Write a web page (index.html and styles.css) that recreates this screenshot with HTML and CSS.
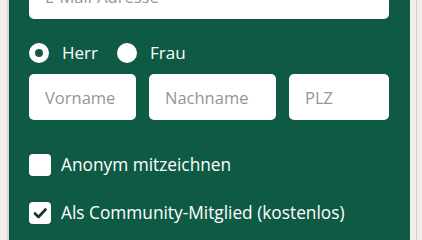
FILE: index.html
```html
<!DOCTYPE html>
<html lang="de">
<head>
<meta charset="utf-8">
<title>Formular</title>
<link rel="stylesheet" href="styles.css">
</head>
<body>
<div class="page">
  <div class="panel">
    <form class="form">
      <input class="field field-email" type="email" placeholder="E-Mail-Adresse">
      <div class="radios">
        <label class="radio"><span class="dot dot-on"></span>Herr</label>
        <label class="radio"><span class="dot"></span>Frau</label>
      </div>
      <div class="names">
        <input class="field" type="text" placeholder="Vorname">
        <input class="field" type="text" placeholder="Nachname">
        <input class="field" type="text" placeholder="PLZ">
      </div>
      <label class="check"><span class="box"></span>Anonym mitzeichnen</label>
      <label class="check"><span class="box"><svg class="tick" viewBox="0 0 22 22" width="22" height="22"><path d="M6 11.5l3.5 3.5L16.5 7.5" fill="none" stroke="#12372b" stroke-width="2.6" stroke-linecap="round" stroke-linejoin="round"/></svg></span>Als Community-Mitglied (kostenlos)</label>
    </form>
  </div>
</div>
</body>
</html>
```

FILE: styles.css
```css
html, body {
  margin: 0;
  padding: 0;
  min-height: 100%;
}
body {
  background: #f1eee9;
  font-family: "Open Sans", "Liberation Sans", sans-serif;
}
.page {
  margin-left: 7px;
  width: 407px;
  min-height: 100vh;
  border-left: 2px solid #dcd8d0;
  border-right: 1px solid #d4d0c8;
  background: #f1eee9;
  display: flex;
}
.panel {
  width: 401px;
  min-height: 100vh;
  background: #0e5a44;
  box-sizing: border-box;
  padding: 0 21px 24px 20px;
}
.form {
  display: flex;
  flex-direction: column;
  margin-top: -27px;
}
.field {
  display: block;
  box-sizing: border-box;
  height: 46px;
  margin: 0;
  border: 0;
  border-radius: 5px;
  background: #ffffff;
  padding: 0 16px;
  font-family: "Open Sans", "Liberation Sans", sans-serif;
  font-size: 16.5px;
  color: #333333;
  outline: none;
  min-width: 0;
  width: 100%;
}
.field::placeholder {
  color: #959595;
  opacity: 1;
}
.radios {
  display: flex;
  align-items: center;
  margin-top: 24px;
  height: 20px;
  gap: 19px;
}
.radio {
  display: flex;
  align-items: center;
  gap: 13px;
  color: #ffffff;
  font-size: 17px;
  line-height: 20px;
}
.dot {
  display: block;
  width: 20px;
  height: 20px;
  box-sizing: border-box;
  border-radius: 50%;
  background: #ffffff;
}
.dot-on {
  border: 6px solid #ffffff;
  background: #0e5a44;
}
.names {
  display: grid;
  grid-template-columns: 107px 127px 100px;
  column-gap: 13px;
  margin-top: 11px;
}
.check {
  display: flex;
  align-items: center;
  gap: 10px;
  color: #ffffff;
  font-size: 17.3px;
  line-height: 22px;
  height: 22px;
  margin-top: 34px;
}
.check + .check {
  margin-top: 26px;
}
.box {
  display: block;
  flex: none;
  width: 22px;
  height: 22px;
  border-radius: 4px;
  background: #ffffff;
}
.tick {
  display: block;
}
```
